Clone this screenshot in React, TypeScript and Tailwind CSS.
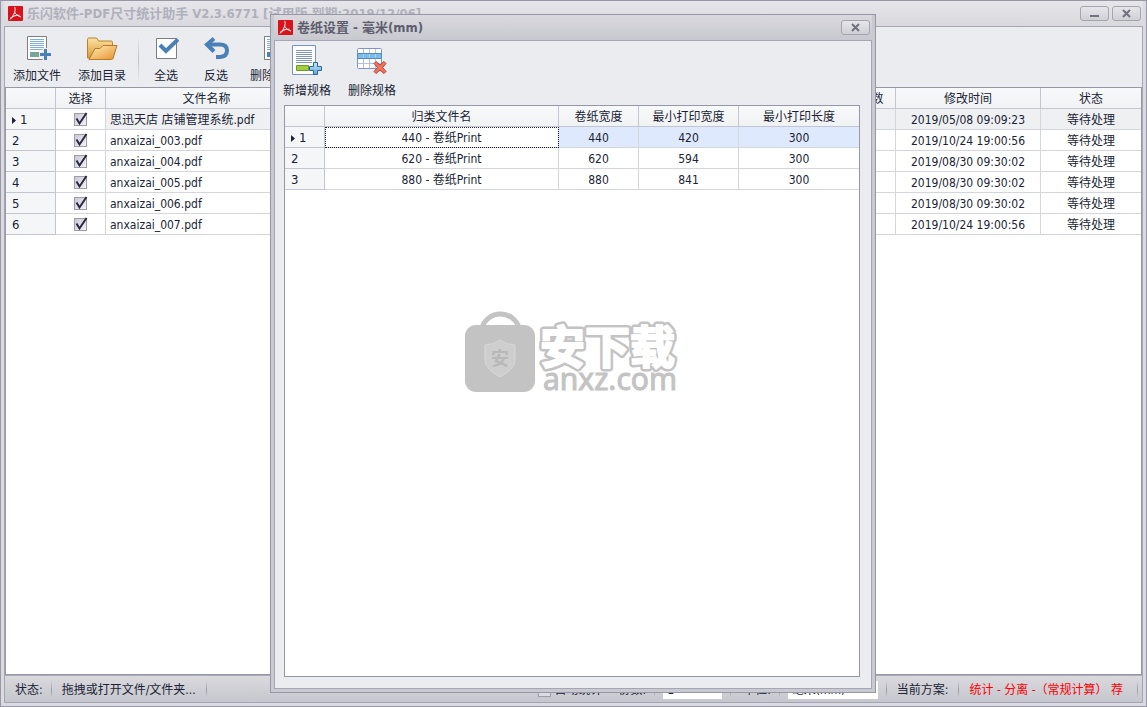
import React from 'react';

interface FileRow {
  name: string;
  modified: string;
  status: string;
}

interface RollRow {
  name: string;
  width: number;
  minWidth: number;
  minLength: number;
}

const files: FileRow[] = [
  { name: '思迅天店 店铺管理系统.pdf', modified: '2019/05/08 09:09:23', status: '等待处理' },
  { name: 'anxaizai_003.pdf', modified: '2019/10/24 19:00:56', status: '等待处理' },
  { name: 'anxaizai_004.pdf', modified: '2019/08/30 09:30:02', status: '等待处理' },
  { name: 'anxaizai_005.pdf', modified: '2019/08/30 09:30:02', status: '等待处理' },
  { name: 'anxaizai_006.pdf', modified: '2019/08/30 09:30:02', status: '等待处理' },
  { name: 'anxaizai_007.pdf', modified: '2019/10/24 19:00:56', status: '等待处理' },
];

const rolls: RollRow[] = [
  { name: '440 - 卷纸Print', width: 440, minWidth: 420, minLength: 300 },
  { name: '620 - 卷纸Print', width: 620, minWidth: 594, minLength: 300 },
  { name: '880 - 卷纸Print', width: 880, minWidth: 841, minLength: 300 },
];

const headCell =
  'h-[21px] border-r border-b border-[#c5c5d1] bg-linear-to-b from-[#f8f9fa] to-[#f1f2f4] p-0 pt-0.5 text-center font-normal last:border-r-0';
const bodyCell =
  'h-[21px] border-r border-b border-[#d5d5de] p-0 pt-0.5 text-center last:border-r-0';
const indexCell =
  'h-[21px] border-r border-b border-[#c5c5d1] bg-[#f4f6f8] p-0 pt-0.5 text-left text-[13px] font-normal';

/* ---------- icons ---------- */

const PdfIcon = () => (
  <svg className="h-[15px] w-[15px]" viewBox="0 0 15 15">
    <rect width="15" height="15" rx="1" fill="#d8131b" />
    <path
      d="M6.500 1c1.200 1.200.7 3.200.1 5.200C5.700 8.800 4 12 2 13.500M6.600 6c.8 2.200 2.800 3.800 6.400 5M2 12.500C4 10.500 7.500 9 11.500 9.200"
      fill="none"
      stroke="#fff"
      strokeWidth="1"
    />
  </svg>
);

const AddFileIcon = () => (
  <svg className="h-[26px] w-[28px]" viewBox="-3 0 28 26">
    <path d="M1.500.5h19v23h-19z" fill="#fff" stroke="#7d7d7d" />
    <path d="M4 3.500h14M4 5.500h14M4 7.500h14M4 9.500h14M4 11.500h14M4 13.500h14" stroke="#7fb0dc" />
    <path d="M4 16h10v5H4z" fill="#76a797" />
    <path d="M19.500 12v14M13 18.500h13" stroke="#ebecef" strokeWidth="6" />
    <path d="M19.500 13v11M14 18.500h11" stroke="#4a80b8" strokeWidth="3" />
  </svg>
);

const FolderIcon = () => (
  <svg className="h-[26px] w-[32px]" viewBox="0 0 32 26">
    <defs>
      <linearGradient id="folderBack" x1="0" y1="0" x2="0" y2="1">
        <stop offset="0" stopColor="#fbe3a0" />
        <stop offset="1" stopColor="#d99a3a" />
      </linearGradient>
      <linearGradient id="folderFront" x1="0" y1="0" x2="1" y2="1">
        <stop offset="0" stopColor="#fff0bc" />
        <stop offset="1" stopColor="#e5912a" />
      </linearGradient>
    </defs>
    <path
      d="M1.500 22V3.500q0-1.500 1.500-1.500h7q1 0 1.500 1l1 2H25q1.500 0 1.500 1.500V22z"
      fill="url(#folderBack)"
      stroke="#b8802c"
    />
    <path
      d="M3 23.500 9 12.500h5l3-3h14l-4 13q-.5 1-1.500 1z"
      fill="url(#folderFront)"
      stroke="#bb762a"
      strokeLinejoin="round"
    />
  </svg>
);

const SelectAllIcon = () => (
  <svg className="h-[26px] w-[26px]" viewBox="0 0 26 26">
    <path d="M3.500 2.500h20v20h-20z" fill="#fff" stroke="#7d7d7d" />
    <path d="M7 9l6 6L25 3.500" fill="none" stroke="#4a80b8" strokeWidth="4" />
  </svg>
);

const InvertIcon = () => (
  <svg className="h-[26px] w-[26px]" viewBox="0 0 26 26">
    <path d="M11 2.500 4 8.500l7 7" fill="none" stroke="#4a80b8" strokeWidth="4" />
    <path d="M4 8.500h13q7 0 7 6t-7 6.500h-4" fill="none" stroke="#4a80b8" strokeWidth="4" />
  </svg>
);

const RemoveFileIcon = () => (
  <svg className="h-[26px] w-[26px]" viewBox="0 0 26 26">
    <path d="M3.500.5h19v23h-19z" fill="#fff" stroke="#7d7d7d" />
    <path d="M6 3.500h14M6 5.500h14M6 7.500h14M6 9.500h14M6 11.500h14M6 13.500h14" stroke="#7fb0dc" />
    <path d="M6 16h12v5H6z" fill="#4a80b8" />
  </svg>
);

const AddSpecIcon = () => (
  <svg className="h-[32px] w-[32px]" viewBox="0 0 32 32">
    <defs>
      <linearGradient id="plusFill" x1="0" y1="0" x2="0" y2="1">
        <stop offset="0" stopColor="#c4e8f8" />
        <stop offset="1" stopColor="#5aa8d8" />
      </linearGradient>
    </defs>
    <path d="M1.500.5h23v29h-23z" fill="#fdfdff" stroke="#7b93c0" />
    <path
      d="M5 5.500h16M5 7.500h16M5 9.500h16M5 11.500h16M5 13.500h16M5 15.500h16M5 17.500h16"
      stroke="#8296bd"
    />
    <path d="M5.500 20.500h12v5h-12z" fill="#a3cc3e" stroke="#6f9a26" />
    <path
      d="M22.500 17.500h4v4h4v4h-4v4h-4v-4h-4v-4h4z"
      fill="url(#plusFill)"
      stroke="#2f6496"
      strokeLinejoin="round"
    />
  </svg>
);

const DeleteSpecIcon = () => (
  <svg className="h-[32px] w-[32px]" viewBox="0 0 32 32">
    <rect x="1.500" y="3.500" width="24" height="20" rx="1" fill="#fff" stroke="#7d95c6" />
    <path d="M7.500 4v19M13.500 4v19M19.500 4v19M2 8.500h23M2 13.500h23M2 18.500h23" stroke="#b3c1e0" />
    <path d="M1.500 8.500h24v5h-24z" fill="#7dbbe8" stroke="#4f8ec4" />
    <path d="M7.500 9v4M13.500 9v4M19.500 9v4" stroke="#a5d3f2" />
    <path
      d="M18 18.500l2-2 4 3.500 4-3.500 2 2-3.500 4 3.500 4-2 2-4-3.500-4 3.500-2-2 3.500-4z"
      fill="#ee7560"
      stroke="#c03a2c"
      strokeLinejoin="round"
    />
  </svg>
);

/* ---------- shared pieces ---------- */

const CaptionButton: React.FC<{ kind: 'minimize' | 'close' }> = ({ kind }) => (
  <button
    aria-label={kind === 'close' ? '关闭' : '最小化'}
    className="flex h-[15px] w-[29px] items-center justify-center rounded-[3px] border border-[#a5a5b1] bg-linear-to-b from-[#e6e6ea] to-[#cfcfd6]"
  >
    <svg className="h-[9px] w-[11px]" viewBox="0 0 11 9">
      {kind === 'close' ? (
        <path d="M2 1l7 7M9 1L2 8" stroke="#72727e" strokeWidth="2" />
      ) : (
        <path d="M1 7h9" stroke="#72727e" strokeWidth="2" />
      )}
    </svg>
  </button>
);

interface ToolButtonProps {
  label: string;
  icon: React.ReactNode;
  className?: string;
}

const ToolButton: React.FC<ToolButtonProps> = ({ label, icon, className = 'w-[64px]' }) => (
  <button className={`flex shrink-0 flex-col items-center gap-1 whitespace-nowrap ${className}`}>
    {icon}
    <span className="leading-[20px]">{label}</span>
  </button>
);

const StatusSeparator = () => (
  <span className="h-[18px] w-px shrink-0 bg-linear-to-b from-[#d2d2d8] via-[#9a9aa6] to-[#d2d2d8]" />
);

const RowIndex: React.FC<{ index: number; current: boolean }> = ({ index, current }) => (
  <span className="flex items-center pl-1.5">
    {current && (
      <svg className="mr-1 h-[7px] w-[4px]" viewBox="0 0 4 7">
        <path d="M0 0l4 3.500L0 7z" fill="#201f35" />
      </svg>
    )}
    {index}
  </span>
);

const RowCheckbox: React.FC<{ label: string }> = ({ label }) => (
  <label className="relative mx-auto block h-[13px] w-[13px]">
    <input
      type="checkbox"
      defaultChecked
      aria-label={label}
      className="peer block h-[13px] w-[13px] appearance-none border border-[#9d9dac] bg-linear-to-br from-[#c9c9d3] to-[#f3f3f6]"
    />
    <svg
      className="pointer-events-none absolute -top-px left-0 hidden h-[14px] w-[14px] peer-checked:block"
      viewBox="0 0 14 14"
    >
      <path d="M2.500 6.500 5.500 11.500 12.500 1" fill="none" stroke="#2a2840" strokeWidth="2" />
    </svg>
  </label>
);

/* ---------- main window ---------- */

const FileTable = () => (
  <table className="w-full table-fixed border-separate border-spacing-0">
    <colgroup>
      <col className="w-[50px]" />
      <col className="w-[50px]" />
      <col className="w-[202px]" />
      <col />
      <col className="w-[48px]" />
      <col className="w-[145px]" />
      <col className="w-[100px]" />
    </colgroup>
    <thead>
      <tr>
        <th className={headCell} />
        <th className={headCell}>选择</th>
        <th className={headCell}>文件名称</th>
        <th className={headCell} />
        <th className={headCell}>页数</th>
        <th className={headCell}>修改时间</th>
        <th className={headCell}>状态</th>
      </tr>
    </thead>
    <tbody>
      {files.map((file, i) => (
        <tr key={file.name} className={i === 0 ? 'bg-[#eff0f2]' : 'bg-white'}>
          <th className={indexCell}>
            <RowIndex index={i + 1} current={i === 0} />
          </th>
          <td className="h-[21px] border-r border-b border-[#d5d5de] bg-white p-0">
            <RowCheckbox label={file.name} />
          </td>
          <td className="h-[21px] truncate border-r border-b border-[#d5d5de] p-0 pt-0.5 pl-1 text-left">
            {file.name}
          </td>
          <td className={bodyCell} />
          <td className={bodyCell} />
          <td className={bodyCell}>{file.modified}</td>
          <td className={bodyCell}>{file.status}</td>
        </tr>
      ))}
    </tbody>
  </table>
);

const StatusBar = () => (
  <footer className="flex h-[27px] shrink-0 items-center border-t border-[#a9a9b7] bg-linear-to-b from-[#d9d9de] to-[#c6c6ce] pt-0.5 pr-1 pl-2.5 whitespace-nowrap">
    <span className="mr-2">状态:</span>
    <StatusSeparator />
    <span className="mx-2.5">拖拽或打开文件/文件夹...</span>
    <StatusSeparator />

    <div className="ml-auto flex items-center">
      <label className="mr-4 flex items-center gap-1">
        <input
          type="checkbox"
          className="h-[13px] w-[13px] appearance-none border border-[#9d9dac] bg-[#dcdce3]"
        />
        自动统计
      </label>
      <label htmlFor="copies" className="mr-2">
        份数:
      </label>
      <StatusSeparator />
      <input
        id="copies"
        type="text"
        defaultValue="1"
        className="mx-2 h-[18px] w-[59px] bg-white px-1"
      />
      <StatusSeparator />
      <label htmlFor="unit" className="mr-2 ml-3">
        单位:
      </label>
      <StatusSeparator />
      <select
        id="unit"
        defaultValue="mm"
        className="mx-2 h-[18px] w-[90px] appearance-none bg-white px-1 leading-[18px]"
      >
        <option value="mm">毫米(mm)</option>
      </select>
      <StatusSeparator />
      <span className="mx-2.5">当前方案:</span>
      <StatusSeparator />
      <span className="mr-3.5 ml-2.5 text-[#ff0000]">统计 - 分离 -（常规计算） 荐</span>
      <StatusSeparator />
    </div>
  </footer>
);

/* ---------- roll settings dialog ---------- */

const Watermark = () => (
  <svg
    className="pointer-events-none absolute top-[43%] left-1/2 h-[94px] w-[216px] -translate-x-1/2 -translate-y-1/2"
    viewBox="0 0 216 94"
    aria-label="安下载 anxz.com"
  >
    <defs>
      <text
        id="brand"
        x="76"
        y="60"
        fontFamily="'Noto Sans CJK SC', sans-serif"
        fontSize="45"
        fontWeight="700"
      >
        安下载
      </text>
    </defs>
    <path d="M18 24a19 18 0 0 1 37 0" fill="none" stroke="#c3c3c3" strokeWidth="5" />
    <rect x="1" y="21" width="70" height="67" rx="11" fill="#c3c3c3" />
    <path
      d="M36 36q7 5 15 5v15q0 9-15 17-15-8-15-17V41q8 0 15-5z"
      fill="#cecece"
      stroke="#d8d8d8"
    />
    <text
      x="36"
      y="61"
      textAnchor="middle"
      fontFamily="'Noto Sans CJK SC', sans-serif"
      fontSize="18"
      fontWeight="700"
      fill="#b8b8b8"
    >
      安
    </text>
    <use href="#brand" fill="#c3c3c3" stroke="#c3c3c3" strokeWidth="7" strokeLinejoin="round" />
    <use href="#brand" fill="#fff" stroke="#fff" strokeWidth="2" strokeLinejoin="round" />
    <text
      x="79"
      y="86"
      fontFamily="'Noto Sans', sans-serif"
      fontSize="30"
      fontWeight="400"
      fill="#c3c3c3"
      stroke="#c3c3c3"
      strokeWidth="1"
    >
      anxz.com
    </text>
  </svg>
);

const RollTable = () => (
  <table className="w-full table-fixed border-separate border-spacing-0">
    <colgroup>
      <col className="w-[40px]" />
      <col />
      <col className="w-[80px]" />
      <col className="w-[100px]" />
      <col className="w-[120px]" />
    </colgroup>
    <thead>
      <tr>
        <th className={headCell} />
        <th className={headCell}>归类文件名</th>
        <th className={headCell}>卷纸宽度</th>
        <th className={headCell}>最小打印宽度</th>
        <th className={headCell}>最小打印长度</th>
      </tr>
    </thead>
    <tbody>
      {rolls.map((roll, i) => (
        <tr key={roll.name} className={i === 0 ? 'bg-[#dfe9fd]' : 'bg-white'}>
          <th className={indexCell}>
            <RowIndex index={i + 1} current={i === 0} />
          </th>
          <td
            className={`${bodyCell} bg-white ${
              i === 0 ? 'outline-1 -outline-offset-1 outline-dotted outline-[#201f35]' : ''
            }`}
          >
            {roll.name}
          </td>
          <td className={bodyCell}>{roll.width}</td>
          <td className={bodyCell}>{roll.minWidth}</td>
          <td className={bodyCell}>{roll.minLength}</td>
        </tr>
      ))}
    </tbody>
  </table>
);

const RollDialog = () => (
  <section
    role="dialog"
    aria-labelledby="roll-title"
    className="absolute top-[13px] right-[270px] bottom-[13px] left-[269px] flex flex-col border border-[#9797a7] bg-[#c9c9d2] px-[3px] pb-[3px]"
  >
    <header className="flex h-[25px] shrink-0 items-center gap-1 bg-linear-to-b from-[#d9d9de] to-[#c8c8d0] pr-0.5 pl-1">
      <PdfIcon />
      <h2 id="roll-title" className="flex-1 text-[13px] font-bold text-[#5d5d6d]">
        卷纸设置 - 毫米(mm)
      </h2>
      <CaptionButton kind="close" />
    </header>

    <div className="flex min-h-0 flex-1 flex-col border border-[#a5a5b3] bg-[#ebecef] pr-[11px] pb-[11px] pl-[9px]">
      <div className="-ml-[9px] flex h-[64px] shrink-0 items-start gap-px pt-1">
        <ToolButton label="新增规格" icon={<AddSpecIcon />} />
        <ToolButton label="删除规格" icon={<DeleteSpecIcon />} />
      </div>
      <div className="relative min-h-0 flex-1 border border-[#9797a7] bg-white">
        <RollTable />
        <Watermark />
      </div>
    </div>
  </section>
);

const App: React.FC = () => {
  return (
    <div className="relative flex h-screen flex-col overflow-hidden border border-[#9797a7] bg-[#dadae0] px-[3px] pb-[3px] font-['DejaVu_Sans_Condensed','Noto_Sans_CJK_SC',sans-serif] text-[12px] leading-[18px] text-[#201f35]">
      <header className="flex h-[25px] shrink-0 items-center gap-[3px] bg-linear-to-b from-[#e6e6ea] to-[#d8d8de] pr-0.5 pl-1">
        <PdfIcon />
        <h1 className="ml-px flex-1 truncate text-[13px] font-bold text-[#b0b0bc]">
          乐闪软件-PDF尺寸统计助手 V2.3.6771 [试用版 到期:2019/12/06]
        </h1>
        <CaptionButton kind="minimize" />
        <CaptionButton kind="close" />
      </header>

      <div className="flex min-h-0 flex-1 flex-col border border-[#a5a5b3] bg-[#ebecef]">
        <div className="flex h-[60px] shrink-0 items-start pt-[9px]">
          <ToolButton label="添加文件" icon={<AddFileIcon />} />
          <ToolButton label="添加目录" icon={<FolderIcon />} className="w-[66px]" />
          <span className="mr-0.5 ml-[3px] h-[46px] w-px bg-linear-to-b from-[#ebecef] via-[#bfc0c8] to-[#ebecef]" />
          <ToolButton label="全选" icon={<SelectAllIcon />} className="w-[50px]" />
          <ToolButton label="反选" icon={<InvertIcon />} className="w-[50px]" />
          <ToolButton label="删除选择" icon={<RemoveFileIcon />} className="w-[66px]" />
        </div>
        <main className="min-h-0 flex-1 border border-[#9797a7] bg-white">
          <FileTable />
        </main>
        <StatusBar />
      </div>

      <RollDialog />
    </div>
  );
};

export default App;
